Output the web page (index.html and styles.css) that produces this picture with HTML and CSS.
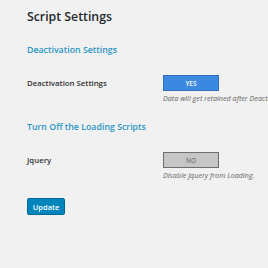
FILE: index.html
```html
<!DOCTYPE html>
<html lang="en">
<head>
    <meta charset="UTF-8">
    <meta name="viewport" content="width=device-width, initial-scale=1.0">
    <title>Script Settings</title>
    <link rel="stylesheet" href="styles.css">
</head>
<body>

    <!-- Settings page -->
    <div class="wrap">
        <h1>Script Settings</h1>

        <h2 class="section-title">Deactivation Settings</h2>
        <div class="form-row">
            <div class="row-label">Deactivation Settings</div>
            <div class="row-field">
                <button class="toggle toggle-on">YES</button>
                <p class="description">Data will get retained after Deactivation.</p>
            </div>
        </div>

        <h2 class="section-title">Turn Off the Loading Scripts</h2>
        <div class="form-row">
            <div class="row-label">Jquery</div>
            <div class="row-field">
                <button class="toggle toggle-off">NO</button>
                <p class="description">Disable Jquery from Loading.</p>
            </div>
        </div>

        <button class="update-btn">Update</button>
    </div>

</body>
</html>
```

FILE: styles.css
```css
body {
    font-family: "Open Sans", Arial, sans-serif;
    background-color: #f1f1f1;
    color: #23282d;
    margin: 0;
    padding: 0;
    overflow: hidden;
}

.wrap {
    padding: 8px 0 0 27px;
}

h1 {
    font-size: 12.3px;
    font-weight: 600;
    margin: 0 0 18px;
    line-height: 18px;
}

.section-title {
    font-size: 8.8px;
    font-weight: 600;
    color: #2a95c5;
    margin: 0;
    line-height: 12px;
}

/* Rows */
.form-row {
    display: flex;
    margin-top: 19px;
    margin-bottom: 18px;
}

.row-label {
    width: 136px;
    flex-shrink: 0;
    font-size: 7.8px;
    font-weight: 600;
    color: #333;
    line-height: 12px;
    padding-top: 2px;
}

.row-field {
    flex: 1;
    min-width: 0;
}

.toggle {
    width: 56px;
    height: 16px;
    padding: 0;
    font-family: inherit;
    font-size: 6.5px;
    border: 1px solid;
    display: block;
}

.toggle-on {
    background-color: #3c87e0;
    border-color: #2f70c0;
    color: #fff;
    font-weight: 600;
}

.toggle-off {
    background-color: #c6c6c6;
    border-color: #6f6f6f;
    color: #555;
}

.description {
    font-size: 7.2px;
    font-style: italic;
    color: #666;
    line-height: 10px;
    margin: 2px 0 0;
    white-space: nowrap;
}

.update-btn {
    display: block;
    width: 38px;
    height: 17px;
    padding: 0;
    background-color: #0085ba;
    border: 1px solid #006799;
    border-radius: 2px;
    color: #fff;
    font-family: inherit;
    font-size: 7.5px;
    font-weight: 600;
}
```
